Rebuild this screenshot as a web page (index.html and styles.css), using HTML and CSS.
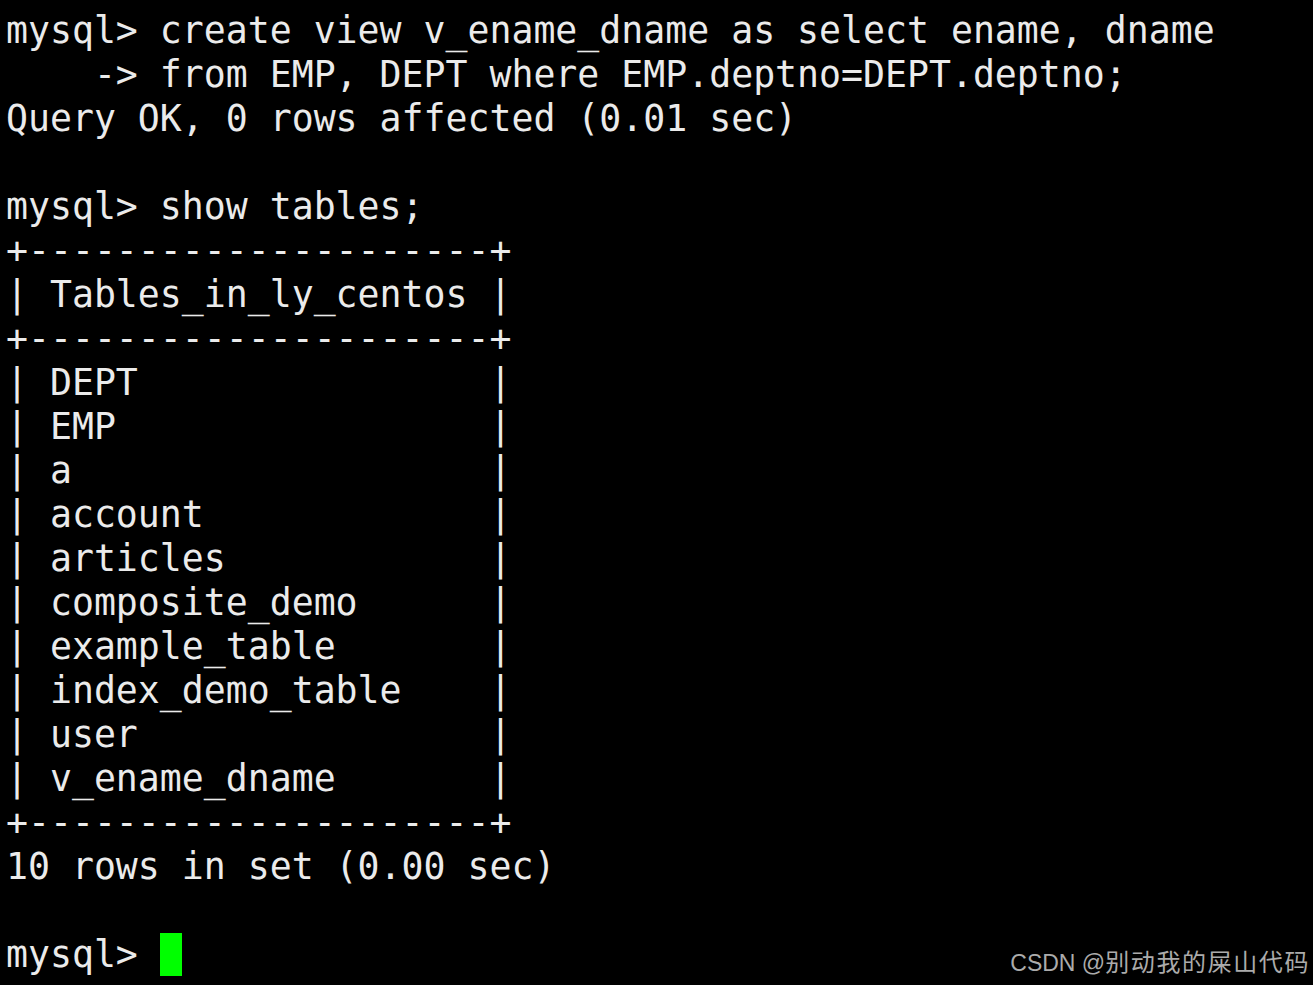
FILE: index.html
```html
<!DOCTYPE html>
<html lang="zh">
<head>
<meta charset="utf-8">
<link rel="stylesheet" href="styles.css">
</head>
<body>
<pre class="term">mysql&gt; create view v_ename_dname as select ename, dname
    -&gt; from EMP, DEPT where EMP.deptno=DEPT.deptno;
Query OK, 0 rows affected (0.01 sec)

mysql&gt; show tables;
+---------------------+
| Tables_in_ly_centos |
+---------------------+
| DEPT                |
| EMP                 |
| a                   |
| account             |
| articles            |
| composite_demo      |
| example_table       |
| index_demo_table    |
| user                |
| v_ename_dname       |
+---------------------+
10 rows in set (0.00 sec)

mysql&gt; <span class="cursor"></span></pre>
<div class="watermark">CSDN @<span class="cjk">别动我的屎山代码</span></div>
</body>
</html>
```

FILE: styles.css
```css
html, body {
  margin: 0;
  padding: 0;
  background: #000;
  width: 1313px;
  height: 985px;
  overflow: hidden;
}
body {
  position: relative;
}
.term {
  margin: 0;
  padding: 9px 0 0 6px;
  font-family: "DejaVu Sans Mono", monospace;
  font-size: 36.5px;
  line-height: 44px;
  color: #ebebeb;
  white-space: pre;
}
.cursor {
  display: inline-block;
  width: 22px;
  height: 43px;
  background: #00ff00;
  vertical-align: top;
}
.watermark {
  position: absolute;
  right: 3px;
  bottom: 9px;
  font-family: "Liberation Sans", "Noto Sans CJK SC", sans-serif;
  font-size: 23px;
  line-height: 26px;
  color: #ababab;
  white-space: nowrap;
}
.cjk {
  font-family: "Noto Sans CJK SC", sans-serif;
  font-size: 24px;
  letter-spacing: 1.6px;
}
```
